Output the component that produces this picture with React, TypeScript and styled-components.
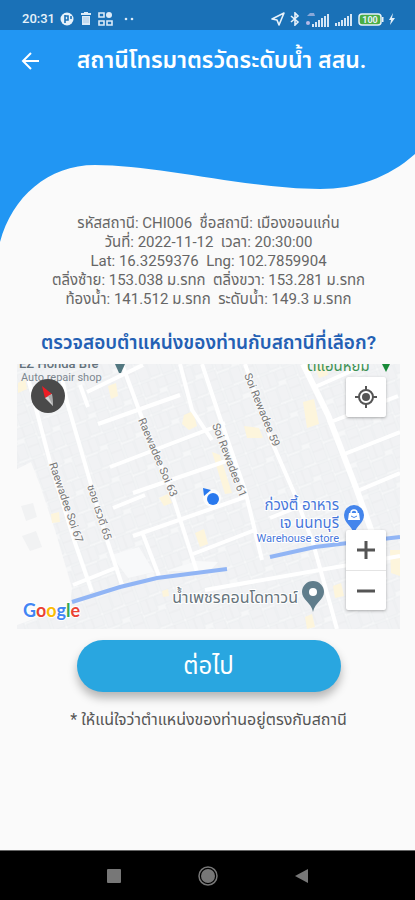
import React from "react";
import styled, { createGlobalStyle } from "styled-components";

const fontStack = `Roboto, "Noto Sans", "Noto Sans Thai", sans-serif`;

const GlobalStyle = createGlobalStyle`
  * { box-sizing: border-box; }
  html, body { margin: 0; padding: 0; background: #fafafa; }
  body { font-family: ${fontStack}; }
  button { font-family: inherit; border: 0; padding: 0; cursor: pointer; }
  svg { display: block; }
`;

const Screen = styled.div`
  min-height: 100vh;
  display: flex;
  flex-direction: column;
  background: #fafafa;
`;

const StatusBar = styled.div`
  height: 30px;
  padding: 8px 20px 0 22px;
  display: flex;
  align-items: center;
  justify-content: space-between;
  background: #1a71b7;
  color: #e6f1fa;
`;

const StatusGroup = styled.div<{ $gap: number }>`
  display: flex;
  align-items: center;
  gap: ${(p) => p.$gap}px;
`;

const Clock = styled.time`
  font-size: 13px;
  line-height: 16px;
  font-weight: 500;
`;

const AppBar = styled.header`
  height: 62px;
  padding: 0 16px;
  display: grid;
  grid-template-columns: 28px 1fr;
  align-items: center;
  background: #2196f3;
  color: #fff;
`;

const BackButton = styled.button`
  width: 28px;
  height: 28px;
  display: grid;
  place-items: center;
  background: none;
  color: #fff;
`;

const Title = styled.h1`
  margin: 0;
  text-align: center;
  font-size: 23px;
  line-height: 32px;
  font-weight: 600;
  white-space: nowrap;
`;

const Wave = styled.svg`
  width: 100%;
  height: 150px;
  flex: none;
`;

const Content = styled.main`
  flex: 1;
  margin-top: -28px;
  padding: 0 15px 16px 17px;
  display: flex;
  flex-direction: column;
  align-items: center;
`;

const StationInfo = styled.section`
  text-align: center;
  font-size: 15px;
  line-height: 19px;
  color: #666;
  p { margin: 0; white-space: pre-wrap; }
`;

const Question = styled.h2`
  margin: 21px 0 8px;
  font-size: 19px;
  line-height: 26px;
  font-weight: 600;
  color: #2460b4;
  text-align: center;
`;

const MapFrame = styled.section`
  position: relative;
  width: 100%;
  height: 265px;
  overflow: hidden;
  background: #f8f9fa;
`;

const MapArt = styled.svg`
  width: 100%;
  height: 100%;
  font-family: ${fontStack};
`;

const Controls = styled.div`
  position: absolute;
  top: 13px;
  right: 14px;
  bottom: 19px;
  display: flex;
  flex-direction: column;
  justify-content: space-between;
`;

const ControlCard = styled.div`
  width: 40px;
  display: flex;
  flex-direction: column;
  background: #fff;
  border-radius: 2px;
  box-shadow: 0 1px 3px rgba(0, 0, 0, 0.3);
`;

const ControlButton = styled.button`
  height: 40px;
  display: grid;
  place-items: center;
  background: none;
  color: #555;
  & + & { border-top: 1px solid #e4e4e4; }
`;

const Compass = styled.button`
  position: absolute;
  top: 15px;
  left: 14px;
  width: 34px;
  height: 34px;
  border-radius: 50%;
  background: #4a4a4a;
`;

const NextButton = styled.button`
  width: 264px;
  max-width: 100%;
  height: 52px;
  margin-top: 11px;
  border-radius: 26px;
  background: #29a6e0;
  color: #fff;
  font-size: 24px;
  line-height: 32px;
  box-shadow: 0 6px 10px rgba(0, 0, 0, 0.28);
`;

const Note = styled.p`
  margin: 17px 0 0;
  font-size: 16px;
  line-height: 22px;
  color: #555;
  text-align: center;
`;

const NavBar = styled.nav`
  height: 50px;
  padding: 0 100px;
  display: flex;
  align-items: center;
  justify-content: space-between;
  background: #000;
  border-top: 1px solid #666;
`;

const NavButton = styled.button`
  width: 28px;
  height: 28px;
  display: grid;
  place-items: center;
  background: none;
`;

const Signal = () => (
  <svg width="18" height="13" viewBox="0 0 18 13" fill="#d5e6f5" aria-hidden="true">
    <path d="M0 10h2v3H0zM3 9h2v4H3zM6 7h2v6H6zM9 5h2v8H9zM12 3h2v10h-2zM15 1h2v12h-2z" />
  </svg>
);

const streets = [
  "M28 378L50 462L75 543L92 592",
  "M62 378L67 402L92 488L107 540L123 588",
  "M122 364L142 418L170 488L197 572",
  "M80 385L88 407",
  "M180 364L192 410L212 440",
  "M202 364L220 418L245 490L262 560",
  "M245 364L272 442L295 495L313 543L337 629",
  "M87 392L143 365",
  "M98 424L180 395",
  "M110 467L225 423",
  "M133 493L235 458",
  "M113 508L145 495",
  "M133 536L248 496",
  "M193 554L255 530",
  "M73 585L118 567",
  "M142 532L159 576",
  "M315 387L365 365",
  "M328 423L398 396",
  "M342 455L400 432",
  "M355 492L400 473",
  "M270 518L303 505",
  "M205 590L400 556",
];

const yellowLots = [
  "M108 386l8-3 2 13-7 3z",
  "M184 415l9-4 4 15-8 4-7-6z",
  "M303 402l11-3 5 25-12 4z",
  "M244 426l15 2 4 10-16 0z",
  "M212 452l8 3 12 38-7 1z",
  "M51 514l8-2 1 10-8 1z",
  "M159 498l9-4 4 9-8 3z",
  "M195 533l9-4 4 15-8 3z",
  "M162 591l6-2 1 7-6 1z",
  "M390 550h10v26l-9-3z",
  "M333 586l8-3 3 13-9 2z",
  "M305 617l7-3 3 13-8 2z",
  "M18 383l7-4 2 10-9 4z",
  "M315 367l10-3 3 11-9 3z",
];

const streetNames = [
  { x: 49, y: 464, angle: 71, label: "Raewadee Soi 67" },
  { x: 87, y: 486, angle: 72, label: "ซอย เรวดี 65" },
  { x: 138, y: 420, angle: 67, label: "Raewadee Soi 63" },
  { x: 212, y: 425, angle: 69, label: "Soi Rewadee 61" },
  { x: 244, y: 375, angle: 68, label: "Soi Rewadee 59" },
];

function MapDrawing() {
  return (
    <MapArt viewBox="17 364 383 265" preserveAspectRatio="xMidYMid slice" role="img" aria-label="Google map">
      <defs>
        <pattern id="lots" width="38" height="34" patternUnits="userSpaceOnUse" patternTransform="rotate(-20)">
          <path d="M1 1h15v14H1zM17 1h20v10H17zM1 18h11v15H1zM13 17h10v15H13zM25 13h12v20H25z" fill="#f1f2f4" stroke="#eceef0" />
          <path d="M8 1v14M26 1v10M25 22h12" fill="none" stroke="#ebedef" />
        </pattern>
      </defs>
      <rect x="17" y="364" width="383" height="265" fill="#f6f7f8" />
      <rect x="17" y="364" width="383" height="265" fill="url(#lots)" />
      <path d="M17 469L31 462L40 485L55 530L72 588L70 606L17 625z" fill="#fafafa" />
      <path d="M21 506l12-3 4 14-11 4zM22 536l14-5 6 16-12 4z" fill="#f1f2f3" />
      <path d="M111 555l28-8 15 25-26 6zM166 571l30-10 22 1-8 9z" fill="#f8f9fa" />
      {yellowLots.map((d) => <path key={d} d={d} fill="#fdf5dc" />)}
      {streets.map((d) => <path key={d} d={d} fill="none" stroke="#fff" strokeWidth="4" />)}
      <path d="M303 364L328 415L355 485L373 535L384 580" fill="none" stroke="#fff" strokeWidth="6" />
      <path d="M72 602L120 587L157 578L227 569M270 557L315 547L348 543L400 537" fill="none" stroke="#91b5f5" strokeWidth="4" />
      <g fontSize="11" fill="#777" stroke="#fafafa" strokeWidth="2" paintOrder="stroke">
        {streetNames.map((s) => (
          <text key={s.label} transform={`translate(${s.x} ${s.y}) rotate(${s.angle})`}>{s.label}</text>
        ))}
      </g>
      <text x="19" y="368" fontSize="13" fontWeight="500" fill="#64727c">EZ Honda Bfe</text>
      <text x="21" y="381" fontSize="11" fill="#7c8790">Auto repair shop</text>
      <path d="M115 364h10l-4 9h-2z" fill="#527780" />
      <text x="307" y="371" fontSize="15" fill="#3e9254">ตีแอนหยิม</text>
      <path d="M382 364h8l-4 8z" fill="#188a38" />
      <g fill="#4777db" textAnchor="end" stroke="#fff" strokeWidth="2" paintOrder="stroke">
        <text x="339" y="510" fontSize="15">ก่วงตี้ อาหาร</text>
        <text x="339" y="528" fontSize="15">เจ นนทบุรี</text>
        <text x="339" y="542" fontSize="11">Warehouse store</text>
      </g>
      <path d="M354 534c-2-8-10-11-10-19a10 10 0 0 1 20 0c0 8-8 11-10 19z" fill="#4485ec" />
      <path d="M349 513h10l1 7h-12z" fill="#fff" />
      <path d="M351 514v-1a3 3 0 0 1 6 0v1" fill="none" stroke="#fff" strokeWidth="1.5" />
      <path d="M351 516q3 3 6 0" fill="none" stroke="#4485ec" />
      <text x="298" y="603" fontSize="16" fill="#66747c" textAnchor="end" stroke="#fff" strokeWidth="2" paintOrder="stroke">น้ำเพชรคอนโดทาวน์</text>
      <path d="M313 612c-2-10-11-12-11-20a11 11 0 0 1 22 0c0 8-9 10-11 20z" fill="#607d8b" />
      <circle cx="313" cy="592" r="4" fill="#fff" />
      <circle cx="212" cy="498" r="9" fill="#fff" opacity=".8" />
      <circle cx="213" cy="499" r="6" fill="#2979ee" />
      <path d="M203 488l8 2-7 6z" fill="#2979ee" />
      <text x="23" y="617" fontFamily="Lato, sans-serif" fontWeight="700" fontSize="18" stroke="#fff" strokeWidth="2" paintOrder="stroke">
        <tspan fill="#4285f4">G</tspan><tspan fill="#ea4335">o</tspan><tspan fill="#fbbc05">o</tspan><tspan fill="#4285f4">g</tspan><tspan fill="#34a853">l</tspan><tspan fill="#ea4335">e</tspan>
      </text>
    </MapArt>
  );
}

export default function App() {
  return (
    <Screen>
      <GlobalStyle />
      <StatusBar>
        <StatusGroup $gap={5}>
          <Clock>20:31</Clock>
          <svg width="14" height="14" viewBox="0 0 14 14" aria-hidden="true">
            <circle cx="7" cy="7" r="6.5" fill="#e6f1fa" />
            <path d="M5 3v8M5 4h3v4h-3M11 4v3" fill="none" stroke="#1a71b7" strokeWidth="1.6" />
          </svg>
          <svg width="14" height="14" viewBox="0 0 14 14" fill="#dcebf8" aria-hidden="true">
            <path d="M2 3V1h3V0h4v1h3v2zM3 4h8v9H3z" />
            <path d="M5 5v6M7 5v6M9 5v6" stroke="#a9cae6" />
          </svg>
          <svg width="15" height="14" viewBox="0 0 15 14" fill="none" stroke="#dcebf8" strokeWidth="1.6" aria-hidden="true">
            <path d="M1 1h5v4H1zM1 9h5v4H1zM9 9h5v4H9z" />
            <circle cx="11" cy="3" r="3" fill="#dcebf8" stroke="none" />
          </svg>
          <svg width="16" height="4" viewBox="0 0 16 4" fill="#dcebf8" aria-hidden="true">
            <circle cx="8" cy="2" r="1.3" /><circle cx="14" cy="2" r="1.3" />
          </svg>
        </StatusGroup>
        <StatusGroup $gap={5}>
          <svg width="14" height="14" viewBox="0 0 14 14" fill="none" stroke="#e6f1fa" strokeWidth="1.6" strokeLinejoin="round" aria-hidden="true">
            <path d="M1 7L13 1L8 13L6 8z" />
          </svg>
          <svg width="10" height="14" viewBox="0 0 10 14" fill="none" stroke="#e6f1fa" strokeWidth="1.6" aria-hidden="true">
            <path d="M1 4l7 6-3 3V1l3 3-7 6" />
          </svg>
          <svg width="25" height="15" viewBox="0 0 25 15" fill="#d5e6f5" aria-hidden="true">
            <path d="M7 12h2v3H7zM10 10h2v5h-2zM13 8h2v7h-2zM16 6h2v9h-2zM19 4h2v11h-2zM22 2h2v13h-2z" />
            <path d="M2 4l3-3h4l1 3z" fill="#89a8d8" /><circle cx="3" cy="11" r="2" fill="#b8bae8" />
          </svg>
          <Signal />
          <svg width="26" height="13" viewBox="0 0 26 13" aria-label="100">
            <rect x="1" y="1" width="22" height="11" rx="3" fill="#49ae45" stroke="#e6f1fa" strokeWidth="1.5" />
            <path d="M24 4h1.5v5H24z" fill="#e6f1fa" />
            <text x="12" y="10" textAnchor="middle" fontFamily="Roboto, sans-serif" fontWeight="700" fontSize="9" fill="#e6f1fa">100</text>
          </svg>
          <svg width="6" height="12" viewBox="0 0 6 12" fill="#e6f1fa" aria-hidden="true"><path d="M4 0L0 7h2L1 12l5-7H3z" /></svg>
        </StatusGroup>
      </StatusBar>
      <AppBar>
        <BackButton aria-label="Back">
          <svg width="20" height="20" viewBox="0 0 20 20" fill="none" stroke="currentColor" strokeWidth="2"><path d="M19 10H3M11 2L3 10l8 8" /></svg>
        </BackButton>
        <Title>สถานีโทรมาตรวัดระดับน้ำ สสน.</Title>
      </AppBar>
      <Wave viewBox="0 92 415 150" preserveAspectRatio="none" aria-hidden="true">
        <path d="M0 91H415V154C388 178 356 189 320 189C250 189 157 165 95 165C48 165 12 197 0 242z" fill="#2196f3" />
      </Wave>
      <Content>
        <StationInfo>
          <p>รหัสสถานี: CHI006  ชื่อสถานี: เมืองขอนแก่น</p>
          <p>วันที่: 2022-11-12  เวลา: 20:30:00</p>
          <p>Lat: 16.3259376  Lng: 102.7859904</p>
          <p>ตลิ่งซ้าย: 153.038 ม.รทก  ตลิ่งขวา: 153.281 ม.รทก</p>
          <p>ท้องน้ำ: 141.512 ม.รทก  ระดับน้ำ: 149.3 ม.รทก</p>
        </StationInfo>
        <Question>ตรวจสอบตำแหน่งของท่านกับสถานีที่เลือก?</Question>
        <MapFrame>
          <MapDrawing />
          <Compass aria-label="Reset bearing">
            <svg width="34" height="34" viewBox="0 0 34 34">
              <path d="M11 7L21 15L14 19z" fill="#ed1c24" />
              <path d="M14 19L21 15L22 27z" fill="#d5d5d5" />
              <path d="M17 17l5 10-1-12z" fill="#aaa" />
            </svg>
          </Compass>
          <Controls>
            <ControlCard>
              <ControlButton aria-label="My location">
                <svg width="22" height="22" viewBox="0 0 22 22" fill="none" stroke="currentColor" strokeWidth="2">
                  <circle cx="11" cy="11" r="7" /><circle cx="11" cy="11" r="4" fill="currentColor" stroke="none" />
                  <path d="M11 0v4M11 18v4M0 11h4M18 11h4" />
                </svg>
              </ControlButton>
            </ControlCard>
            <ControlCard>
              <ControlButton aria-label="Zoom in">
                <svg width="18" height="18" viewBox="0 0 18 18" stroke="currentColor" strokeWidth="3"><path d="M0 9h18M9 0v18" /></svg>
              </ControlButton>
              <ControlButton aria-label="Zoom out">
                <svg width="18" height="18" viewBox="0 0 18 18" stroke="currentColor" strokeWidth="3"><path d="M0 9h18" /></svg>
              </ControlButton>
            </ControlCard>
          </Controls>
        </MapFrame>
        <NextButton>ต่อไป</NextButton>
        <Note>* ให้แน่ใจว่าตำแหน่งของท่านอยู่ตรงกับสถานี</Note>
      </Content>
      <NavBar aria-label="System">
        <NavButton aria-label="Recent apps">
          <svg width="14" height="14" viewBox="0 0 14 14"><rect width="14" height="14" rx="1" fill="#777" /></svg>
        </NavButton>
        <NavButton aria-label="Home">
          <svg width="20" height="20" viewBox="0 0 20 20"><circle cx="10" cy="10" r="9" fill="none" stroke="#777" strokeWidth="1.5" /><circle cx="10" cy="10" r="7" fill="#777" /></svg>
        </NavButton>
        <NavButton aria-label="Back">
          <svg width="13" height="14" viewBox="0 0 13 14"><path d="M13 0v14L0 7z" fill="#777" /></svg>
        </NavButton>
      </NavBar>
    </Screen>
  );
}
